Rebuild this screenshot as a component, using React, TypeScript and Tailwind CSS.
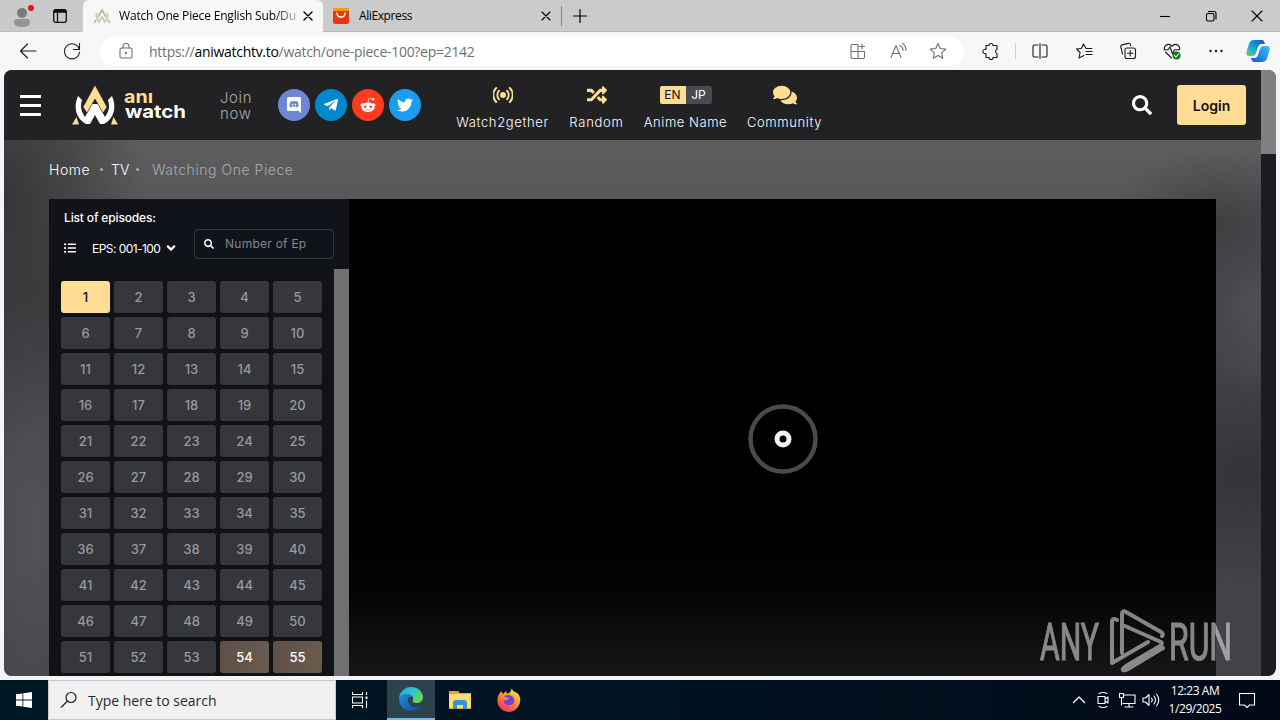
import type { ReactNode } from "react";
import {
  FaAngleDown,
  FaComments,
  FaListUl,
  FaRandom,
  FaRedditAlien,
  FaSearch,
  FaTelegramPlane,
  FaTwitter,
} from "react-icons/fa";

const episodes = Array.from({ length: 55 }, (_, i) => i + 1);

const Glyph = ({ children, className = "h-5 w-5" }: { children: ReactNode; className?: string }) => (
  <svg
    viewBox="0 0 20 20"
    fill="none"
    stroke="currentColor"
    strokeWidth="1.1"
    strokeLinecap="round"
    strokeLinejoin="round"
    className={`shrink-0 ${className}`}
  >
    {children}
  </svg>
);

const Slot = ({ children, className = "w-11" }: { children: ReactNode; className?: string }) => (
  <div className={`flex h-full shrink-0 items-center justify-center ${className}`}>{children}</div>
);

const LogoMark = ({ className }: { className: string }) => (
  <svg viewBox="0 0 46 40" className={className}>
    <path d="M6 11C1 22 4 34 14 39h4l5-9 5 9h4C42 34 45 22 40 11l-4 4c2 7 1 11-3 17l-7-13h-6l-7 13c-4-6-5-10-3-17z" fill="#fff" />
    <path d="M23 0 11 22l4 6 8-14 8 14 4-6z" fill="#ffdd95" stroke="#222225" strokeWidth=".6" />
    <path d="M4.500 32 0 39.500h7zM41.500 32l4.500 7.500h-7z" fill="#ffdd95" />
  </svg>
);

const TabStrip = () => (
  <div className="flex h-8 bg-[#cbcbcb]">
    <div className="flex w-[83px] shrink-0 items-center rounded-br-sm border-b border-[#bdbdbd] bg-[#c9c9c9] pl-[13px]">
      <svg viewBox="0 0 22 24" className="h-6 w-[22px]">
        <circle cx="9" cy="9" r="5" fill="#7c7c7c" />
        <path d="M1 18q0-3 3-3h10q3 0 3 3 0 5-8 5t-8-5" fill="#969491" />
        <circle cx="18" cy="4" r="3" fill="#e81123" />
      </svg>
      <svg viewBox="0 0 14 14" fill="none" stroke="#111" strokeWidth="1.3" className="ml-[18px] h-3.5 w-3.5">
        <rect x=".7" y=".7" width="12.6" height="12.6" rx="2" />
        <path d="M1 3h12M4.500 3v10" />
        <path d="M1 2h12" strokeWidth="2.4" />
      </svg>
    </div>
    <div className="flex w-[240px] shrink-0 items-center rounded-t-md bg-[#f7f7f7] pl-[11px]">
      <svg viewBox="0 0 16 16" fill="none" stroke="#bcb994" strokeWidth="1.7" className="h-4 w-4">
        <path d="M3 5Q1 9 5 14l3-5 3 5q4-5 2-9" stroke="#c8c8bd" />
        <path d="m4 9 4-7 4 7M0 15l2-3M16 15l-2-3" />
      </svg>
      <div className="ml-[9px] w-[177px] shrink-0 bg-linear-to-r from-black from-88% to-[#00000040] bg-clip-text text-[12px] tracking-[-0.17px] whitespace-nowrap text-transparent">
        Watch One Piece English Sub/Du
      </div>
      <Glyph className="ml-[4px] h-4 w-4">
        <path d="m5 5 10 10M15 5 5 15" strokeWidth="1.7" />
      </Glyph>
    </div>
    <div className="flex flex-1 items-center border-b border-[#b9b9b9] pl-2.5">
      <svg viewBox="0 0 16 16" className="h-4 w-4">
        <rect width="16" height="16" rx="2" fill="#ec3410" />
        <path d="M0 3V2q0-2 2-2h12q2 0 2 2v1z" fill="#f79b0b" />
        <path d="M4 5q0 4 4 4t4-4" fill="none" stroke="#fff" strokeWidth="1.4" strokeLinecap="round" />
      </svg>
      <span className="ml-[10px] w-[179px] text-[12px] tracking-[-0.4px]">AliExpress</span>
      <Glyph className="ml-0 h-4 w-4">
        <path d="m5 5 10 10M15 5 5 15" strokeWidth="1.4" />
      </Glyph>
      <div className="ml-[7px] h-5 w-px bg-[#858585]" />
      <Glyph className="ml-[8px] h-5 w-5">
        <path d="M10 3.500v13M3.500 10h13" strokeWidth="1.2" />
      </Glyph>
      <div className="flex-1" />
      <Slot className="w-[46px]">
        <Glyph><path d="M5 10.500h10" strokeLinecap="butt" /></Glyph>
      </Slot>
      <Slot className="w-[46px]">
        <Glyph>
          <rect x="5.500" y="7.500" width="7.500" height="7.500" rx="1.500" />
          <path d="M7.500 5.500H13a2 2 0 0 1 2 2V13" />
        </Glyph>
      </Slot>
      <Slot className="w-[46px]">
        <Glyph><path d="m5 5 10 10M15 5 5 15" /></Glyph>
      </Slot>
    </div>
  </div>
);

const STAR = "m10 2.500 2.300 5 5.400.6-4 3.700 1.100 5.400-4.800-2.700-4.800 2.700 1.100-5.400-4-3.700 5.400-.6z";

const Toolbar = () => (
  <div className="flex h-[38px] items-center bg-[#f7f7f7] pl-1.5 text-[#1b1b1b]">
    <Slot>
      <Glyph><path d="M18 10H2.500M9.500 3l-7 7 7 7" /></Glyph>
    </Slot>
    <Slot>
      <Glyph><path d="M17.300 8.500a7.500 7.500 0 1 0 .2 2.500M17.500 2.500v6h-6" /></Glyph>
    </Slot>
    <div className="ml-[6px] flex h-[30px] w-[864px] shrink-0 items-center rounded-full bg-white text-[#707070]">
      <Glyph className="ml-4 h-5 w-5">
        <rect x="4" y="7" width="12" height="10" rx="1.500" />
        <path d="M7 7V5.500a3 3 0 0 1 6 0V7" />
        <circle cx="10" cy="12" r=".6" fill="currentColor" />
      </Glyph>
      <span className="ml-[13px] flex-1 text-[14px] tracking-[-0.29px]">
        https://<span className="text-black">aniwatchtv.to</span>/watch/one-piece-100?ep=2142
      </span>
      <Slot className="w-10">
        <Glyph>
          <path d="M10 3.500H4.500a1.500 1.500 0 0 0-1.500 1.500v11a1.500 1.500 0 0 0 1.500 1.500H15a1.500 1.500 0 0 0 1.500-1.500v-5.500H3M10 3.500v14M14 3v5M11.500 5.500h5" />
        </Glyph>
      </Slot>
      <Slot className="w-10">
        <Glyph><path d="m3 16.500 5-12 5 12M4.700 12.500h6.600M12 4.500q3 1.500 3 5M14.500 2.500q3.500 2 3.500 7" /></Glyph>
      </Slot>
      <Slot className="mr-[6px] w-10">
        <Glyph><path d={STAR} /></Glyph>
      </Slot>
    </div>
    <Slot className="ml-[5px] w-11">
      <Glyph>
        <path d="M5 4.500h3a2 2 0 0 1 4 0h4v4a2.200 2.200 0 0 0-1.500 2 2.200 2.200 0 0 0 1.500 2v4h-4a2 2 0 0 1-4 0H5v-4a2.200 2.200 0 1 1 0-4z" />
      </Glyph>
    </Slot>
    <div className="ml-[2px] h-4 w-px bg-[#cfcfcf]" />
    <Slot className="ml-[2px] w-11">
      <Glyph>
        <path d="M8 4H4.500a1.500 1.500 0 0 0-1.500 1.500v9A1.500 1.500 0 0 0 4.500 16H8M12 4h3.500A1.500 1.500 0 0 1 17 5.500v9a1.500 1.500 0 0 1-1.500 1.500H12M10 2.500v15" />
      </Glyph>
    </Slot>
    <Slot>
      <Glyph><path d="M16 7.500h-4L9.500 3 7.300 7.500 2.500 8l3.600 3.500L5 17l5-2.500M12 10.500h6M12 13.500h6M13.500 7.500H18" /></Glyph>
    </Slot>
    <Slot>
      <Glyph>
        <rect x="7" y="7" width="10.500" height="10.500" rx="2" />
        <path d="M12.200 9.500v5.500M9.500 12.200H15M4.500 13 2.800 5.800a1.500 1.500 0 0 1 1-1.900l6.700-1.500a1.500 1.500 0 0 1 1.900 1l.4 1.400" />
      </Glyph>
    </Slot>
    <Slot>
      <Glyph>
        <path d="M9.500 17 3.500 11M2.300 8.500C2 3 8 2 10 5.500 12 2 18 3 17.700 8.500M2 8.800h4l2-3 2.500 7 2-4h4.700" />
        <circle cx="14.500" cy="14.500" r="4" fill="#107c10" stroke="none" />
        <path d="m12.500 14.500 1.500 1.500 2.600-3" stroke="#fff" />
      </Glyph>
    </Slot>
    <Slot>
      <Glyph>
        <g fill="currentColor" stroke="none">
          <circle cx="4.500" cy="10" r="1.200" />
          <circle cx="10" cy="10" r="1.200" />
          <circle cx="15.500" cy="10" r="1.200" />
        </g>
      </Glyph>
    </Slot>
    <Slot className="w-10">
      <svg viewBox="0 0 24 24" className="h-6 w-6">
        <defs>
          <linearGradient id="cpA" x1="0" y1="1" x2="1" y2="0">
            <stop stopColor="#70d36d" />
            <stop offset=".45" stopColor="#16a8d5" />
            <stop offset="1" stopColor="#174bc9" />
          </linearGradient>
          <linearGradient id="cpB" x1="0" y1="1" x2="1" y2="0">
            <stop stopColor="#1e55df" />
            <stop offset="1" stopColor="#33c4f3" />
          </linearGradient>
        </defs>
        <path d="M16 1q2 0 3 4h-4q-2 0-3 3l-2 6q-1 3-4 3H3q-4 0-2-6l2-6q1-4 5-4z" fill="url(#cpA)" />
        <path d="M8 23q-2 0-3-4h4q2 0 3-3l2-6q1-3 4-3h3q4 0 2 6l-2 6q-1 4-5 4z" fill="url(#cpB)" />
      </svg>
    </Slot>
  </div>
);

const NavItem = ({ label, className, children }: { label: string; className: string; children: ReactNode }) => (
  <div className={`flex shrink-0 flex-col items-center ${className}`}>
    <div className="flex h-5 items-center text-[#ffdd95]">{children}</div>
    <span className="mt-[7px] text-[13px] leading-5 font-light whitespace-nowrap">{label}</span>
  </div>
);

const SiteHeader = () => (
  <header className="flex h-[70px] shrink-0 items-center bg-[#222225] text-white">
    <div className="ml-4 flex w-[21px] shrink-0 flex-col gap-1.5">
      <div className="h-[3px] bg-white" />
      <div className="h-[3px] bg-white" />
      <div className="h-[3px] bg-white" />
    </div>
    <LogoMark className="ml-[31px] h-10 w-[46px] shrink-0" />
    <svg viewBox="0 0 64 44" className="ml-1.5 h-11 w-16 shrink-0 overflow-visible" fontFamily="Inter, sans-serif" fontWeight="700">
      <text x="0" y="19.500" fontSize="18" textLength="29" lengthAdjust="spacingAndGlyphs" fill="#ffdd95">anı</text>
      <text x="1" y="35" fontSize="18" textLength="61" lengthAdjust="spacingAndGlyphs" fill="#fff">watch</text>
    </svg>
    <div className="ml-[32px] w-[58px] shrink-0 pt-[2px] text-[15px] leading-4 font-light tracking-[0.6px] text-[#aaaaab]">
      Join
      <br />
      now
    </div>
    <div className="flex shrink-0 gap-[5px]">
      <div className="flex h-8 w-8 items-center justify-center rounded-full bg-[#6f85d5]">
        <svg viewBox="0 0 448 512" fill="#fff" className="h-4 w-3.5">
          <path d="M297.216 243.2c0 15.616-11.52 28.416-26.112 28.416-14.336 0-26.112-12.8-26.112-28.416s11.52-28.416 26.112-28.416c14.592 0 26.112 12.8 26.112 28.416zm-119.552-28.416c-14.592 0-26.112 12.8-26.112 28.416s11.776 28.416 26.112 28.416c14.592 0 26.112-12.8 26.112-28.416.256-15.616-11.52-28.416-26.112-28.416zM448 52.736V512c-64.494-56.994-43.868-38.128-118.784-107.776l13.568 47.360H52.480C23.552 451.584 0 428.032 0 398.848V52.736C0 23.552 23.552 0 52.480 0h343.040C424.448 0 448 23.552 448 52.736zm-72.960 242.688c0-82.432-36.864-149.248-36.864-149.248-36.864-27.648-71.936-26.880-71.936-26.880l-3.584 4.096c43.520 13.312 63.744 32.512 63.744 32.512-60.811-33.329-132.244-33.335-191.232-7.424-9.472 4.352-15.104 7.424-15.104 7.424s21.248-20.224 67.328-33.536l-2.560-3.072s-35.072-.768-71.936 26.880c0 0-36.864 66.816-36.864 149.248 0 0 21.504 37.120 78.080 38.912 0 0 9.472-11.520 17.152-21.248-32.512-9.728-44.800-30.208-44.800-30.208 3.766 2.636 9.976 6.053 10.496 6.400 43.210 24.198 104.588 32.126 159.744 8.960 8.960-3.328 18.944-8.192 29.440-15.104 0 0-12.800 20.992-46.336 30.464 7.680 9.728 16.896 20.736 16.896 20.736 56.576-1.792 78.336-38.912 78.336-38.912z" />
        </svg>
      </div>
      <div className="flex h-8 w-8 items-center justify-center rounded-full bg-[#0088cc]">
        <FaTelegramPlane className="h-4 w-4" />
      </div>
      <div className="flex h-8 w-8 items-center justify-center rounded-full bg-[#ff3c1f]">
        <FaRedditAlien className="h-4 w-4" />
      </div>
      <div className="flex h-8 w-8 items-center justify-center rounded-full bg-[#1d9bf0]">
        <FaTwitter className="h-4 w-4" />
      </div>
    </div>
    <nav className="ml-[35px] flex pt-[6px]">
      <NavItem label="Watch2gether" className="w-[93px] tracking-[0.65px]">
        <svg viewBox="0 0 20 18" fill="none" stroke="currentColor" strokeWidth="1.9" strokeLinecap="round" className="h-[18px] w-5">
          <circle cx="10" cy="9" r="3" fill="currentColor" stroke="none" />
          <path d="M6 4.700a6.300 6.300 0 0 0 0 8.600M14 4.700a6.300 6.300 0 0 1 0 8.600M3.200 2a9.800 9.800 0 0 0 0 14M16.800 2a9.800 9.800 0 0 1 0 14" />
        </svg>
      </NavItem>
      <NavItem label="Random" className="ml-5 w-[55px] tracking-[0.75px]">
        <FaRandom className="h-5 w-5" />
      </NavItem>
      <NavItem label="Anime Name" className="ml-5 w-[83px] tracking-[0.55px]">
        <div className="flex h-[18px] w-[52px] overflow-hidden rounded-xs text-[12px] leading-[18px] font-normal tracking-normal">
          <span className="w-[26px] bg-[#ffdd95] text-center text-[#111]">EN</span>
          <span className="w-[26px] bg-[#4a4b51] text-center text-white">JP</span>
        </div>
      </NavItem>
      <NavItem label="Community" className="ml-5 w-[75px] tracking-[0.6px]">
        <FaComments className="h-[22px] w-6" />
      </NavItem>
    </nav>
    <div className="flex-1" />
    <FaSearch className="h-5 w-5 shrink-0" />
    <button className="mr-[15px] ml-[25px] h-10 w-[69px] shrink-0 rounded-[3px] bg-[#ffdd95] text-[14px] font-semibold text-[#111]">
      Login
    </button>
  </header>
);

const EpisodeCell = ({ n }: { n: number }) => {
  let look = "bg-[#35373d] text-[#98999c]";
  if (n === 1) look = "bg-[#ffdd95] text-[#111]";
  if (n >= 54) look = "bg-linear-to-r from-[#5f5048] to-[#695b4d] text-white";

  return (
    <div className={`flex h-8 items-center justify-center rounded-[3px] pt-px text-[13px] font-medium ${look}`}>{n}</div>
  );
};

const EpisodeList = () => (
  <aside className="flex w-[300px] shrink-0 flex-col bg-[#101216] text-white">
    <div className="h-[70px] shrink-0 bg-[#11131b] pt-2.5 pl-[15px]">
      <div className="text-[12px] leading-[18px] font-medium tracking-[-0.15px]">List of episodes:</div>
      <div className="flex">
        <div className="flex h-[42px] w-[130px] items-center text-[12px]">
          <FaListUl className="h-3 w-3" />
          <span className="ml-4 pt-[2px] tracking-[-0.55px] whitespace-nowrap">EPS: 001-100</span>
          <FaAngleDown className="ml-[5px] h-3.5 w-3" />
        </div>
        <div className="mt-[2px] flex h-[30px] w-[140px] items-center rounded border border-[#34363d] pl-[9px]">
          <FaSearch className="h-2.5 w-2.5" />
          <span className="ml-[11px] text-[12px] tracking-[0.25px] text-[#85868b]">Number of Ep</span>
        </div>
      </div>
    </div>
    <div className="flex min-h-0 flex-1">
      <div className="grid flex-1 auto-rows-[32px] grid-cols-5 gap-1 p-3">
        {episodes.map((n) => (
          <EpisodeCell key={n} n={n} />
        ))}
      </div>
      <div className="w-[15px] bg-[#6f7171]" />
    </div>
  </aside>
);

const Player = () => (
  <div className="flex flex-1 justify-center bg-linear-to-b from-black from-60% to-[#171717]">
    <svg viewBox="0 0 70 70" fill="none" className="mt-[205px] h-[70px] w-[70px]">
      <circle cx="35" cy="35" r="32.500" stroke="#4b4b4b" strokeWidth="4.500" />
      <circle cx="35" cy="35" r="6" stroke="#f1f1f1" strokeWidth="5" />
    </svg>
  </div>
);

const Watermark = () => (
  <svg
    viewBox="0 0 194 64"
    className="absolute right-[44px] bottom-[3px] h-16 w-[194px] overflow-visible opacity-50"
    fill="#fff"
    fontFamily="Roboto, sans-serif"
  >
    <g fontSize="52" stroke="#fff" strokeWidth="1.2">
      <text x="2" y="51" textLength="59" lengthAdjust="spacingAndGlyphs">ANY</text>
      <text x="131" y="51" textLength="63" lengthAdjust="spacingAndGlyphs">RUN</text>
    </g>
    <g fill="none" stroke="#fff" strokeWidth="4" strokeLinejoin="round" strokeLinecap="round">
      <path d="M79 11q-5-3-5 2v41l36-21M84 44V5q0-4 4-2l35 20q3 2 1 4M87 17l36 16q2 2-1 4L88 57q-4 3-3 4t5-1l35-21" />
    </g>
  </svg>
);

const Page = () => (
  <div className="relative mx-1 flex h-[606px] overflow-hidden rounded-lg font-[Inter,sans-serif]">
    <div className="flex min-w-0 flex-1 flex-col bg-[#47474a]">
      <SiteHeader />
      <main className="flex min-h-0 flex-1 flex-col bg-[radial-gradient(ellipse_140px_240px_at_0px_60px,#363638,#36363899_45%,#36363800),radial-gradient(ellipse_75px_230px_at_30px_390px,#545259,#54525900),radial-gradient(ellipse_110px_75px_at_1215px_85px,#3a3a3dcc,#3a3a3d00),radial-gradient(ellipse_130px_110px_at_1240px_335px,#303033cc,#30303300),radial-gradient(ellipse_60px_110px_at_1257px_155px,#515155,#51515500),linear-gradient(to_bottom,#5d5d60_0px,#58585a_60px,#434347_150px,#434347_100%)]">
        <div className="flex h-[59px] shrink-0 items-center pl-[45px] text-[14px] font-light tracking-[0.55px] text-white">
          <span className="w-[42px]">Home</span>
          <span className="mr-2 ml-[9px] h-[3px] w-[3px] rounded-full bg-[#aaa]" />
          <span className="w-[17px] tracking-normal">TV</span>
          <span className="mr-2 ml-[8px] h-[3px] w-[3px] rounded-full bg-[#aaa]" />
          <span className="ml-[5px] text-[#aaaaac]">Watching One Piece</span>
        </div>
        <div className="mx-[45px] flex min-h-0 flex-1">
          <EpisodeList />
          <Player />
        </div>
      </main>
    </div>
    <div className="w-[15px] shrink-0 bg-[#1d1c21]">
      <div className="h-[84px] bg-[#808080]" />
    </div>
    <Watermark />
  </div>
);

const Taskbar = () => (
  <div className="flex h-10 items-center bg-linear-to-r from-[#001823] via-[#001320] to-[#020919] text-white">
    <Slot className="w-12">
      <svg viewBox="0 0 16 16" fill="#fff" className="h-4 w-4">
        <path d="m0 2.300 6.500-.9v6.200H0zM7.300 1.200 16 0v7.600H7.300zM0 8.400h6.500v6.200L0 13.700zM7.300 8.400H16V16l-8.700-1.200z" />
      </svg>
    </Slot>
    <div className="flex h-10 w-[288px] shrink-0 items-center border border-[#c9c9c9] bg-[#f1f1f1] pl-[11px] text-[#2a2a2a]">
      <svg viewBox="0 0 18 18" fill="none" stroke="#222" strokeWidth="1.2" className="h-[18px] w-[18px]">
        <circle cx="11" cy="6.500" r="5" />
        <path d="m7.500 10-6.500 6.500" />
      </svg>
      <span className="ml-[10px] text-[14px] tracking-[-0.02px]">Type here to search</span>
    </div>
    <Slot className="w-[51px] pr-[3px]">
      <svg viewBox="0 0 16 16" fill="none" stroke="#fff" strokeWidth="1.1" className="h-4 w-4">
        <path d="M.5 0v2.500h10V0M.5 16v-2.500h10V16M.5 5h10v6H.5zM14.500 0v3M14.500 8.500V16" />
        <path d="M13.500 4.500h2v2.500h-2z" fill="#fff" stroke="none" />
      </svg>
    </Slot>
    <div className="flex h-full w-12 shrink-0 items-center justify-center border-b-2 border-[#76b9ed] bg-[#2c434d]">
      <svg viewBox="0 0 24 24" className="h-6 w-6">
        <defs>
          <linearGradient id="edgeA" x1="0" y1="0" x2="1" y2=".5">
            <stop stopColor="#24a9e6" />
            <stop offset=".6" stopColor="#2dc6ca" />
            <stop offset="1" stopColor="#66d84b" />
          </linearGradient>
          <linearGradient id="edgeB" x1="0" y1="0" x2="1" y2="1">
            <stop stopColor="#238fe0" />
            <stop offset="1" stopColor="#0e4b93" />
          </linearGradient>
        </defs>
        <path d="M0 11C1 4 6 0 12 0c7 0 12 5 12 10 0 4-3 6-7 6-3 0-4-1-3-3s-1-5-5-5-8 1-9 3" fill="url(#edgeA)" />
        <path d="M0 11c2-5 11-6 14-1-5-1-6 2-5 5 1 4 7 7 13 4-4 6-12 6-17 3-3-2-5-6-5-11" fill="url(#edgeB)" />
      </svg>
    </div>
    <Slot className="w-[50px]">
      <svg viewBox="0 0 22 20" className="h-5 w-[22px]">
        <path d="M0 1h9l2 2h11v16H0z" fill="#e9a52b" />
        <path d="M0 4h22v14H0z" fill="#fcd876" />
        <path d="M4 19v-6q0-3 3-3h8q3 0 3 3v6h-4v-4H8v4z" fill="#3893cf" />
      </svg>
    </Slot>
    <Slot className="w-12">
      <svg viewBox="0 0 24 24" className="h-6 w-6">
        <defs>
          <linearGradient id="fox" x1=".8" y1="0" x2=".2" y2="1">
            <stop stopColor="#fff04a" />
            <stop offset=".45" stopColor="#ff9430" />
            <stop offset="1" stopColor="#f52267" />
          </linearGradient>
        </defs>
        <path d="M15 0c0 3 3 4 5 5 2 1 4 5 3 9-1 6-6 10-11 10S1 20 .5 14C.3 10 1 7 3 5l1-2 2 3 3-3 1 3c3-1 4-3 5-6" fill="url(#fox)" />
        <path d="M7 8c4-2 7-1 9 1 3 4 1 8-3 8-4 1-7-2-6-5 2 1 4 0 5-2-2 0-4-1-5-2" fill="#7542d8" />
      </svg>
    </Slot>
    <div className="flex-1" />
    <Slot className="w-6">
      <Glyph><path d="m4.500 12.500 5.500-5.500 5.500 5.500" strokeWidth="1.300" /></Glyph>
    </Slot>
    <Slot className="w-6">
      <Glyph><path d="M5 6.500h7v7H5zM12 9l3-2v6l-3-2M6 3.500q4-2 8 0M6 16.500q4 2 8 0" /></Glyph>
    </Slot>
    <Slot className="w-6">
      <Glyph>
        <path d="M7 5h11v8.500H6M12 13.500V17M8 17h8M2.500 3.500h4v4h-4zM4.500 7.500V15" />
      </Glyph>
    </Slot>
    <Slot className="w-6">
      <Glyph><path d="M2 8h2.500L8 4.500v11L4.500 12H2zM10.500 8q1.500 2 0 4M13 6q3 4 0 8M15.500 4q4.500 6 0 12" /></Glyph>
    </Slot>
    <div className="w-16 shrink-0 text-center text-[12px] leading-[18px] tracking-[-0.45px]">
      <div>12:23 AM</div>
      <div>1/29/2025</div>
    </div>
    <Slot className="mr-[13px] w-10">
      <Glyph><path d="M2.500 3.500h15V15h-5L10 17.500 7.500 15h-5z" strokeLinejoin="miter" /></Glyph>
    </Slot>
  </div>
);

export default function App() {
  return (
    <div className="h-[720px] w-[1280px] overflow-hidden bg-[#f2f4f9] font-['Open_Sans',sans-serif]">
      <TabStrip />
      <Toolbar />
      <Page />
      <div className="h-1" />
      <Taskbar />
    </div>
  );
}
